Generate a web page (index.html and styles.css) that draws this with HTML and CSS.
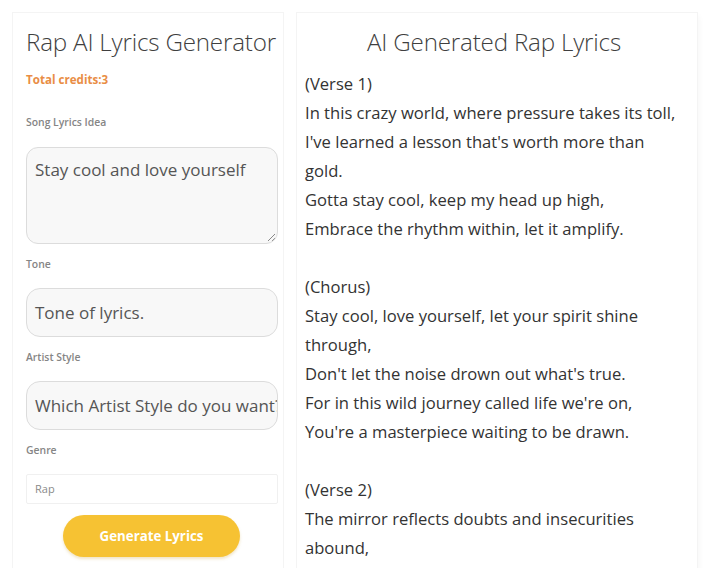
FILE: index.html
```html
<!DOCTYPE html>
<html lang="en">
<head>
<meta charset="utf-8">
<title>Rap AI Lyrics Generator</title>
<link rel="stylesheet" href="styles.css">
</head>
<body>
<div class="page">
  <section class="card form-card">
    <h1 class="title">Rap AI Lyrics Generator</h1>
    <div class="credits">Total credits:3</div>
    <label class="label label-first">Song Lyrics Idea</label>
    <div class="field field-area">Stay cool and love yourself<span class="grip"></span></div>
    <label class="label">Tone</label>
    <div class="field field-input">Tone of lyrics.</div>
    <label class="label">Artist Style</label>
    <div class="field field-input">Which Artist Style do you want?</div>
    <label class="label">Genre</label>
    <div class="field field-select">Rap</div>
    <div class="btn-row"><button class="btn">Generate Lyrics</button></div>
  </section>
  <section class="card lyrics-card">
    <h2 class="title title-center">AI Generated Rap Lyrics</h2>
    <div class="lyrics">
      <p>(Verse 1)</p>
      <p>In this crazy world, where pressure takes its toll,</p>
      <p>I've learned a lesson that's worth more than</p>
      <p>gold.</p>
      <p>Gotta stay cool, keep my head up high,</p>
      <p>Embrace the rhythm within, let it amplify.</p>
      <p>&nbsp;</p>
      <p>(Chorus)</p>
      <p>Stay cool, love yourself, let your spirit shine</p>
      <p>through,</p>
      <p>Don't let the noise drown out what's true.</p>
      <p>For in this wild journey called life we're on,</p>
      <p>You're a masterpiece waiting to be drawn.</p>
      <p>&nbsp;</p>
      <p>(Verse 2)</p>
      <p>The mirror reflects doubts and insecurities</p>
      <p>abound,</p>
    </div>
  </section>
</div>
</body>
</html>
```
FILE: styles.css
```css
* { box-sizing: border-box; }
html, body { margin: 0; padding: 0; background: #ffffff; }
body {
  font-family: "Open Sans", "Noto Sans", sans-serif;
  color: #333;
  width: 720px;
  height: 568px;
  overflow: hidden;
}
.page {
  display: flex;
  gap: 12px;
  padding: 12px 0 0 12px;
}
.card {
  border: 1px solid #f4f4f4;
  border-bottom: 0;
  height: 570px;
  background: #fff;
}
.form-card {
  width: 272px;
  padding: 13px 6px 0 13px;
}
.lyrics-card {
  width: 402px;
  padding: 13px 14px 0 8px;
  box-shadow: 5px 0 6px -4px rgba(0,0,0,0.04);
}
.title {
  margin: 0;
  font-size: 24.2px;
  line-height: 32px;
  font-weight: 300;
  color: #3f3f3f;
  white-space: nowrap;
  letter-spacing: -0.2px;
}
.title-center { text-align: center; }
.credits {
  margin-top: 14px;
  font-size: 11.6px;
  line-height: 16px;
  font-weight: 700;
  color: #e98d45;
}
.label {
  display: block;
  margin-top: 13px;
  font-size: 10.4px;
  line-height: 14px;
  font-weight: 600;
  color: #858585;
}
.label-first { margin-top: 27px; }
.field {
  margin-top: 17px;
  width: 252px;
  border: 1px solid #dcdcdc;
  border-radius: 14px;
  background: #f8f8f8;
  font-size: 17px;
  color: #555;
  padding: 0 8px;
  white-space: nowrap;
  overflow: hidden;
}
.field-area {
  position: relative;
  height: 97px;
  margin-top: 18px;
  padding-top: 9px;
  line-height: 26px;
  border-radius: 12px;
}
.grip {
  position: absolute;
  right: 2px;
  bottom: 2px;
  width: 7px;
  height: 7px;
  background: linear-gradient(135deg, transparent 45%, #888 45%, #888 55%, transparent 55%, transparent 75%, #888 75%, #888 85%, transparent 85%);
}
.field-input {
  height: 49px;
  line-height: 47px;
}
.field-select {
  height: 30px;
  line-height: 28px;
  border: 1px solid #f0f0f0;
  border-radius: 2px;
  background: #fff;
  font-size: 11px;
  color: #8a8a8a;
  padding: 0 8px;
}
.btn-row {
  margin-top: 11px;
  padding-left: 37px;
}
.btn {
  width: 177px;
  height: 42px;
  border: 0;
  border-radius: 21px;
  background: #f6c233;
  color: #fff;
  font-family: "Open Sans", "Noto Sans", sans-serif;
  font-size: 13.3px;
  font-weight: 700;
  box-shadow: 0 2px 3px rgba(200, 150, 30, 0.25);
}
.lyrics {
  margin-top: 11px;
  font-size: 16.6px;
  line-height: 29px;
  color: #333;
}
.lyrics p {
  margin: 0;
  white-space: nowrap;
}
```
